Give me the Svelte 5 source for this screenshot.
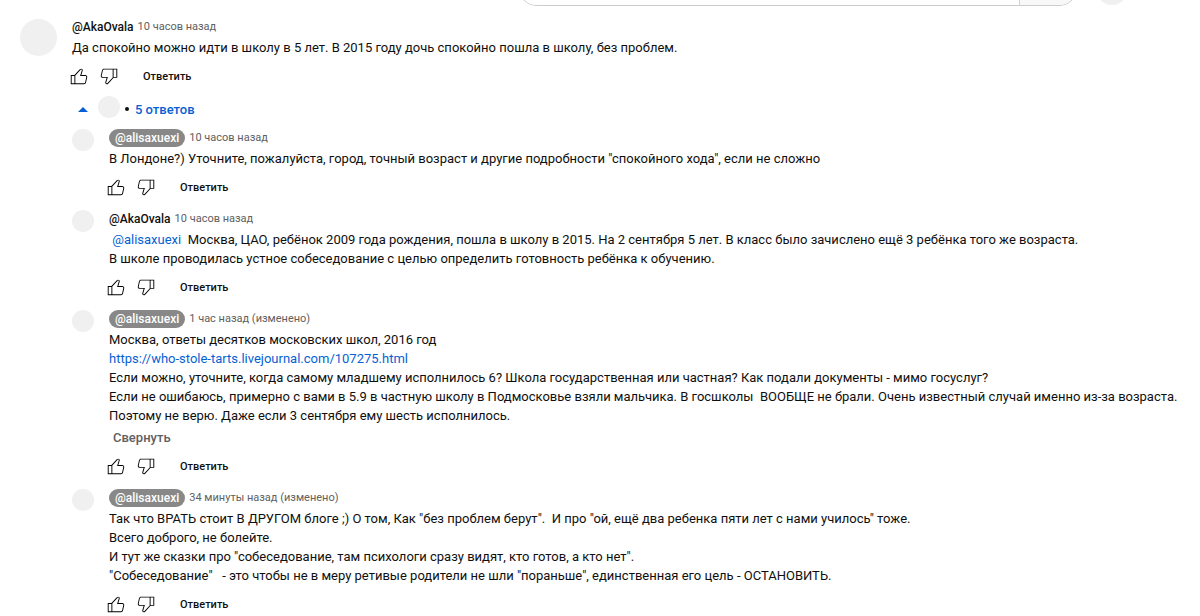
<script>
  const replies = [
    {
      author: '@alisaxuexi',
      owner: true,
      time: '10 часов назад',
      lines: [
        [{ text: 'В Лондоне?) Уточните, пожалуйста, город, точный возраст и другие подробности "спокойного хода", если не сложно' }]
      ]
    },
    {
      author: '@AkaOvala',
      time: '10 часов назад',
      lines: [
        [
          { text: ' ' },
          { text: '@alisaxuexi', href: '#alisaxuexi' },
          { text: '  Москва, ЦАО, ребёнок 2009 года рождения, пошла в школу в 2015. На 2 сентября 5 лет. В класс было зачислено ещё 3 ребёнка того же возраста.' }
        ],
        [{ text: 'В школе проводилась устное собеседование с целью определить готовность ребёнка к обучению.' }]
      ]
    },
    {
      author: '@alisaxuexi',
      owner: true,
      time: '1 час назад (изменено)',
      expanded: true,
      lines: [
        [{ text: 'Москва, ответы десятков московских школ, 2016 год' }],
        [{ text: 'https://who-stole-tarts.livejournal.com/107275.html', href: 'https://who-stole-tarts.livejournal.com/107275.html' }],
        [{ text: 'Если можно, уточните, когда самому младшему исполнилось 6? Школа государственная или частная? Как подали документы - мимо госуслуг?' }],
        [{ text: 'Если не ошибаюсь, примерно с вами в 5.9 в частную школу в Подмосковье взяли мальчика. В госшколы  ВООБЩЕ не брали. Очень известный случай именно из-за возраста.' }],
        [{ text: 'Поэтому не верю. Даже если 3 сентября ему шесть исполнилось.' }]
      ]
    },
    {
      author: '@alisaxuexi',
      owner: true,
      time: '34 минуты назад (изменено)',
      lines: [
        [{ text: 'Так что ВРАТЬ стоит В ДРУГОМ блоге ;) О том, Как "без проблем берут".  И про "ой, ещё два ребенка пяти лет с нами училось" тоже.' }],
        [{ text: 'Всего доброго, не болейте.' }],
        [{ text: 'И тут же сказки про "собеседование, там психологи сразу видят, кто готов, а кто нет".' }],
        [{ text: '"Собеседование"   - это чтобы не в меру ретивые родители не шли "пораньше", единственная его цель - ОСТАНОВИТЬ.' }]
      ]
    }
  ];

  const root = {
    author: '@AkaOvala',
    time: '10 часов назад',
    lines: [[{ text: 'Да спокойно можно идти в школу в 5 лет. В 2015 году дочь спокойно пошла в школу, без проблем.' }]]
  };
</script>

{#snippet comment(item)}
  <div class="head">
    <a class="author" class:owner={item.owner} href="#author">{item.author}</a>
    <a class="time" href="#comment">{item.time}</a>
  </div>
  <div class="text">
    {#each item.lines as line}
      <p>{#each line as part}{#if part.href}<a href={part.href}>{part.text}</a>{:else}{part.text}{/if}{/each}</p>
    {/each}
  </div>
  {#if item.expanded}
    <button class="collapse" type="button">Свернуть</button>
  {/if}
  <div class="actions">
    <button class="icon" type="button" aria-label="Нравится">
      <svg viewBox="0 0 24 24"><path d="M18.77,11h-4.23l1.52-4.94C16.38,5.03,15.54,4,14.38,4c-0.58,0-1.14,0.24-1.52,0.65L7,11H3v10h4h1h9.43c1.06,0,1.98-0.67,2.19-1.61l1.34-6C21.23,12.15,20.18,11,18.77,11z M7,20H4v-8h3V20z M19.98,13.17l-1.34,6C18.54,19.65,18.03,20,17.43,20H8v-8.61l5.6-6.06C13.79,5.12,14.08,5,14.38,5c0.26,0,0.5,0.11,0.63,0.3c0.07,0.1,0.15,0.26,0.09,0.47l-1.52,4.94L13.18,12h1.35h4.23c0.41,0,0.8,0.17,1.03,0.46C19.92,12.61,20.05,12.86,19.98,13.17z" /></svg>
    </button>
    <button class="icon" type="button" aria-label="Не нравится">
      <svg viewBox="0 0 24 24"><path d="M17,4h-1H6.57C5.5,4,4.59,4.67,4.38,5.61l-1.34,6C2.77,12.85,3.82,14,5.23,14h4.23l-1.52,4.94C7.62,19.97,8.46,21,9.62,21c0.58,0,1.14-0.24,1.52-0.65L17,14h4V4H17z M10.4,19.67C10.21,19.88,9.92,20,9.62,20c-0.26,0-0.5-0.11-0.63-0.3c-0.07-0.1-0.15-0.26-0.09-0.47l1.52-4.94l0.4-1.29H9.46H5.23c-0.41,0-0.8-0.17-1.03-0.46c-0.12-0.15-0.25-0.4-0.18-0.72l1.34-6C5.46,5.35,5.97,5,6.57,5H16v8.61L10.4,19.67z M20,13h-3V5h3V13z" /></svg>
    </button>
    <button class="reply-button" type="button">Ответить</button>
  </div>
{/snippet}

<header>
  <form>
    <input type="search" aria-label="Поиск" />
    <button type="button" aria-label="Найти"></button>
  </form>
  <span class="avatar account"></span>
</header>

<main>
  <article>
    <span class="avatar large"></span>
    <div class="body">{@render comment(root)}</div>
  </article>

  <button class="toggle" type="button">
    <svg class="caret" viewBox="0 0 10 5"><path d="M0 5L5 0L10 5Z" /></svg>
    <span class="avatar"></span>
    <span class="dot"></span>
    <span>5 ответов</span>
  </button>

  <section class="replies">
    {#each replies as reply}
      <article>
        <span class="avatar"></span>
        <div class="body">{@render comment(reply)}</div>
      </article>
    {/each}
  </section>
</main>

<style>
  :global(body) {
    background: #fff;
    color: #0f0f0f;
    font: 13px/19px Roboto, sans-serif;
  }

  button {
    padding: 0;
    border: 0;
    background: none;
    color: inherit;
    font: inherit;
    cursor: pointer;
  }

  a {
    color: #065fd4;
    text-decoration: none;
  }

  header {
    display: flex;
    justify-content: flex-end;
    align-items: center;
    gap: 18px;
    margin-top: -32px;
    padding-right: 72px;
  }

  form {
    display: flex;
    flex: 0 1 560px;
    box-sizing: border-box;
    height: 38px;
    border: 1px solid #ccc;
    border-radius: 19px;
    overflow: hidden;
  }

  input {
    flex: 1;
    min-width: 0;
    padding: 0 16px;
    border: 0;
    background: #fff;
    font: inherit;
  }

  form button {
    width: 58px;
    border-left: 1px solid #d3d3d3;
    background: #f8f8f8;
  }

  .avatar {
    flex: none;
    width: 22px;
    height: 22px;
    border-radius: 50%;
    background: #f0f0f0;
  }

  .account {
    width: 32px;
    height: 32px;
    margin-top: 4px;
  }

  .large {
    width: 37px;
    height: 37px;
    margin-top: 1px;
  }

  main {
    padding: 12px 0 0 20px;
  }

  article {
    display: flex;
    gap: 15px;
  }

  .body {
    flex: 1;
    min-width: 0;
  }

  .head {
    display: flex;
    align-items: center;
    gap: 4px;
    height: 18px;
    margin-bottom: 2px;
    font-size: 12px;
    line-height: 18px;
  }

  .author {
    color: #0f0f0f;
    font-weight: 500;
  }

  .owner {
    padding: 0 6px;
    border-radius: 9px;
    background: #888;
    color: #fff;
  }

  .time {
    color: #606060;
    font-size: 11px;
  }

  p {
    margin: 0;
    white-space: pre-wrap;
  }

  .collapse {
    display: block;
    margin: 3px 0 0 4px;
    color: #606060;
    font-weight: 500;
  }

  .actions {
    display: flex;
    align-items: center;
    height: 30px;
    margin: 4px 0 8px -8px;
  }

  .icon {
    display: grid;
    place-items: center;
    width: 30px;
    height: 30px;
  }

  .icon svg {
    width: 22px;
    height: 22px;
  }

  .reply-button {
    margin-left: 19px;
    font-size: 11px;
    font-weight: 500;
  }

  .toggle {
    display: flex;
    align-items: center;
    height: 22px;
    margin: -1px 0 0 58px;
    color: #065fd4;
    font-weight: 500;
  }

  .toggle .avatar {
    margin-bottom: 4px;
  }

  .caret {
    width: 10px;
    height: 5px;
    margin-right: 10px;
    fill: #065fd4;
  }

  .dot {
    width: 4px;
    height: 4px;
    margin: 0 6px 0 5px;
    border-radius: 50%;
    background: #0f0f0f;
  }

  .replies {
    padding: 9px 0 0 52px;
  }
</style>
